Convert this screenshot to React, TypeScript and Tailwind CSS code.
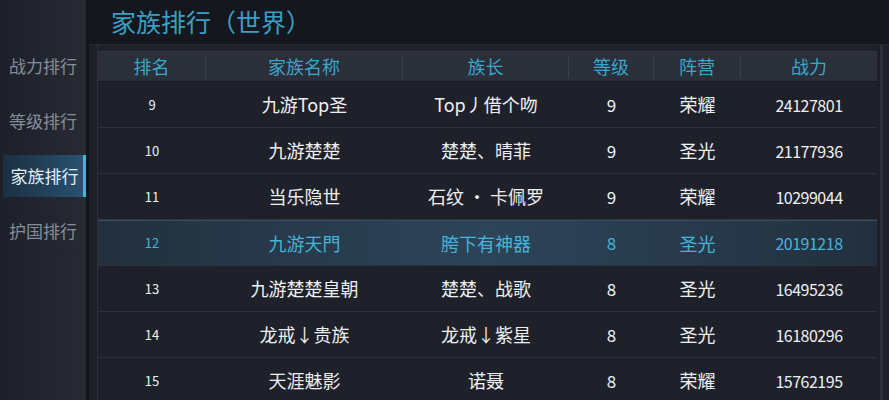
import React from "react";

const cols = [
  "w-[108px]",
  "w-[197px]",
  "w-[166px]",
  "w-[85px]",
  "w-[87px]",
  "flex-1",
];

const headers = ["排名", "家族名称", "族长", "等级", "阵营", "战力"];

const rows = [
  ["9", "九游Top圣", "Top丿借个吻", "9", "荣耀", "24127801"],
  ["10", "九游楚楚", "楚楚、晴菲", "9", "圣光", "21177936"],
  ["11", "当乐隐世", "石纹 · 卡佩罗", "9", "荣耀", "10299044"],
  ["12", "九游天門", "胯下有神器", "8", "圣光", "20191218"],
  ["13", "九游楚楚皇朝", "楚楚、战歌", "8", "圣光", "16495236"],
  ["14", "龙戒↓贵族", "龙戒↓紫星", "8", "圣光", "16180296"],
  ["15", "天涯魅影", "诺聂", "8", "荣耀", "15762195"],
];

const side = ["战力排行", "等级排行", "家族排行", "护国排行"];

const cellText = [
  "text-[13px]",
  "text-[18px]",
  "text-[18px]",
  "text-[17px]",
  "text-[18px]",
  "text-[16px] tracking-[-0.5px]",
];

export default function App() {
  return (
    <div
      className="w-[889px] h-[400px] flex overflow-hidden bg-[#1c1f27]"
      style={{ fontFamily: '"Noto Sans CJK SC", "Noto Sans", sans-serif' }}
    >
      <aside className="w-[86px] shrink-0 flex flex-col gap-[13px] pt-[45px] bg-gradient-to-r from-[#1d2029] to-[#262a33]">
        {side.map((s, i) =>
          i === 2 ? (
            <div
              key={s}
              className="relative h-[42px] ml-[3px] flex items-center justify-center text-[17px] text-[#e6eef5] bg-gradient-to-r from-[#1b3042] to-[#2a5373]"
            >
              {s}
              <div className="absolute right-0 top-0 bottom-0 w-[3px] bg-[#3fb6dc]" />
            </div>
          ) : (
            <div
              key={s}
              className="h-[42px] flex items-center justify-center text-[17px] text-[#848e9b]"
            >
              {s}
            </div>
          )
        )}
      </aside>
      <div className="w-[3px] shrink-0 bg-[#12141a]" />
      <main className="flex-1 flex flex-col min-w-0">
        <div className="h-[45px] shrink-0 bg-[#14171e] pl-[22px] flex items-center text-[25px] text-[#3a9fc2] border-b border-[#252932]">
          家族排行（世界）
        </div>
        <div className="flex flex-1 pl-[8px] pr-[6px] bg-[#1d2028]">
          <div className="flex-1 flex flex-col border-l border-[#2c313b] bg-[#1e2129]">
            <div className="mt-[6px] h-[31px] flex items-center bg-[#2a2f39] border-t border-[#333944] border-b border-b-[#15181e]">
              {headers.map((h, i) => (
                <div
                  key={h}
                  className={`${cols[i]} h-[22px] flex items-center justify-center text-[18px] text-[#3aa7cb] ${
                    i < 5 ? "border-r border-[#3a404b]" : ""
                  }`}
                >
                  {h}
                </div>
              ))}
            </div>
            {rows.map((r, ri) => {
              const hl = ri === 3;
              return (
                <div
                  key={r[0]}
                  className={`h-[46px] shrink-0 flex items-center border-b border-[#2d323c] ${
                    hl
                      ? "bg-gradient-to-r from-[#22303e] via-[#2d4459] to-[#22303e] text-[#45b4da] border-t border-t-[#3a4f63]"
                      : "text-[#eef0f3]"
                  }`}
                >
                  {r.map((c, ci) => (
                    <div
                      key={ci}
                      className={`${cols[ci]} flex items-center justify-center ${cellText[ci]}`}
                    >
                      {c}
                    </div>
                  ))}
                </div>
              );
            })}
          </div>
          <div className="w-[3px] ml-[3px] bg-[#2a2f38]" />
        </div>
      </main>
    </div>
  );
}
